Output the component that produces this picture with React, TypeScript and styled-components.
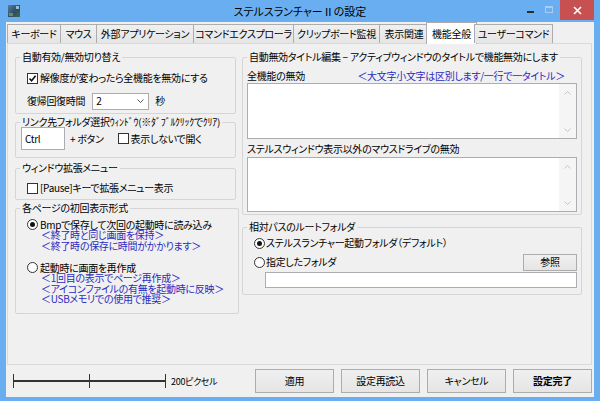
import React from "react";
import styled, { createGlobalStyle } from "styled-components";

/**
 * colours
 */
const FRAME = "#6aaef2";
const FACE = "#f0f0f0";
const LINK = "#2b2bc0";
const EDGE = "#abadb3";

const GlobalStyle = createGlobalStyle`
  html, body { margin: 0; padding: 0; background: ${FRAME}; }
  body {
    font-family: "Noto Sans CJK JP", "Noto Sans", sans-serif;
    font-size: 10px;
    letter-spacing: -0.3px;
    font-feature-settings: "palt" 1;
    color: #000;
  }
  * { box-sizing: border-box; }
`;

/**
 * window frame + title bar
 */
const Window = styled.div`
  width: 600px;
  height: 401px;
  display: flex;
  flex-direction: column;
  background: ${FRAME};
  overflow: hidden;
`,
  TitleBar = styled.div`
  flex: none;
  height: 22px;
  display: grid;
  grid-template-columns: 1fr auto 1fr;
  align-items: center;
`,
  IconSlot = styled.div`
  display: flex;
  padding-left: 8px;
`,
  Title = styled.div`
  font-size: 11px;
  letter-spacing: 0;
  line-height: 1;
  padding-top: 1px;
`,
  Controls = styled.div`
  justify-self: end;
  align-self: start;
  height: 20px;
  display: flex;
  align-items: center;
  padding-right: 6px;
`,
  MinGlyph = styled.span`
  width: 7px;
  height: 2px;
  margin: 4px 11px 0 0;
  background: #2b2b2b;
`,
  MaxGlyph = styled.span`
  width: 8px;
  height: 7px;
  margin: 0 7px 2px 0;
  border: 1px solid #a9cdf2;
  border-top-width: 2px;
`,
  CloseButton = styled.div`
  width: 34px;
  height: 20px;
  background: #c75050;
  display: flex;
  align-items: center;
  justify-content: center;
`;

/**
 * client area, tabs
 */
const Client = styled.div`
  flex: 1;
  margin: 0 6px 4px 6px;
  padding: 0 2px 0 1px;
  background: ${FACE};
  display: flex;
  flex-direction: column;
`,
  TabStrip = styled.div`
  flex: none;
  height: 21px;
  display: flex;
  align-items: flex-end;
`,
  Tab = styled.div<{ $w: number; $active?: boolean }>`
  flex: none;
  width: ${(p) => p.$w}px;
  height: ${(p) => (p.$active ? 22 : 19)}px;
  margin: ${(p) => (p.$active ? "0 -3px -1px -2px" : "0 -1px 0 0")};
  border: 1px solid #acacac;
  border-bottom: none;
  background: ${(p) => (p.$active ? "#fff" : "linear-gradient(#f0f0f0, #e5e5e5)")};
  position: ${(p) => (p.$active ? "relative" : "static")};
  z-index: 2;
  display: flex;
  align-items: center;
  justify-content: center;
  white-space: nowrap;
  line-height: 1;
`,
  Panel = styled.div`
  flex: none;
  height: 322px;
  border: 1px solid #d9d9d9;
  background: ${FACE};
  padding: 6px 9px 0 7px;
  display: flex;
  gap: 3px;
`,
  Column = styled.div<{ $w: number }>`
  width: ${(p) => p.$w}px;
  flex: none;
  display: flex;
  flex-direction: column;
`;

/**
 * group boxes and their rows
 */
const Group = styled.fieldset<{ $h: number; $w?: number; $top?: number }>`
  margin: ${(p) => p.$top ?? 0}px 0 0 0;
  padding: 0;
  min-width: 0;
  width: ${(p) => (p.$w ? `${p.$w}px` : "100%")};
  height: ${(p) => p.$h}px;
  flex: none;
  border: 1px solid #d5d5d5;
  border-radius: 2px;
  display: flex;
  flex-direction: column;
`,
  Legend = styled.legend`
  padding: 0 2px;
  margin-left: 4px;
  height: 14px;
  line-height: 14px;
  white-space: nowrap;
`,
  Row = styled.div<{ $top?: number; $indent?: number; $h?: number; $right?: number }>`
  flex: none;
  display: flex;
  align-items: center;
  height: ${(p) => p.$h ?? 14}px;
  margin: ${(p) => p.$top ?? 0}px ${(p) => p.$right ?? 0}px 0 ${(p) => p.$indent ?? 0}px;
  white-space: nowrap;
  line-height: 1;
`,
  Text = styled.span<{ $gap?: number; $blue?: boolean }>`
  margin-left: ${(p) => p.$gap ?? 0}px;
  color: ${(p) => (p.$blue ? LINK : "inherit")};
`,
  Hint = styled.div<{ $indent: number }>`
  flex: none;
  height: 10.5px;
  line-height: 10.5px;
  margin-left: ${(p) => p.$indent}px;
  color: ${LINK};
  white-space: nowrap;
`;

/**
 * controls
 */
const CheckBox = styled.span<{ $gap?: number }>`
  flex: none;
  width: 11px;
  height: 11px;
  margin-left: ${(p) => p.$gap ?? 0}px;
  border: 1px solid #333;
  background: #fff;
  display: inline-flex;
  align-items: center;
  justify-content: center;
`,
  Radio = styled.span<{ $on?: boolean }>`
  flex: none;
  width: 11px;
  height: 11px;
  border: 1px solid #333;
  border-radius: 50%;
  background: #fff;
  display: inline-flex;
  align-items: center;
  justify-content: center;
  &::after {
    content: "";
    width: 5px;
    height: 5px;
    border-radius: 50%;
    background: ${(p) => (p.$on ? "#111" : "transparent")};
  }
`,
  Combo = styled.div`
  flex: none;
  width: 57px;
  height: 17px;
  margin-left: 7px;
  border: 1px solid #acacac;
  background: #fff;
  display: flex;
  align-items: center;
  justify-content: space-between;
  padding: 0 4px 0 3px;
`,
  Field = styled.div<{ $w?: number; $h: number; $top?: number; $left?: number; $right?: number }>`
  flex: none;
  width: ${(p) => (p.$w ? `${p.$w}px` : "auto")};
  height: ${(p) => p.$h}px;
  margin: ${(p) => p.$top ?? 0}px ${(p) => p.$right ?? 0}px 0 ${(p) => p.$left ?? 0}px;
  border: 1px solid ${EDGE};
  background: #fff;
  display: flex;
  align-items: center;
  padding-left: 3px;
`,
  EditBox = styled.div<{ $h: number; $top: number }>`
  flex: none;
  height: ${(p) => p.$h}px;
  margin: ${(p) => p.$top}px 4px 0 4px;
  border: 1px solid ${EDGE};
  background: #fff;
  display: flex;
  justify-content: flex-end;
`,
  ScrollTrack = styled.div`
  width: 17px;
  background: #f5f5f5;
  display: flex;
  flex-direction: column;
  justify-content: space-between;
`,
  ScrollArrow = styled.div`
  height: 17px;
  display: flex;
  align-items: center;
  justify-content: center;
`,
  Button = styled.div<{ $w: number; $h: number; $bold?: boolean }>`
  flex: none;
  width: ${(p) => p.$w}px;
  height: ${(p) => p.$h}px;
  border: 1px solid #acacac;
  background: linear-gradient(#f0f0f0, #e5e5e5);
  display: flex;
  align-items: center;
  justify-content: center;
  font-weight: ${(p) => (p.$bold ? 700 : 400)};
  line-height: 1;
`;

/**
 * footer
 */
const Footer = styled.div`
  flex: 1;
  display: flex;
  align-items: flex-start;
  padding: 4px 0 0 6px;
`,
  Scale = styled.div`
  height: 24px;
  display: flex;
  align-items: center;
`,
  ScaleLabel = styled.span`
  font-size: 9px;
  margin-left: 4px;
  line-height: 1;
`,
  Buttons = styled.div`
  margin-left: auto;
  display: flex;
  gap: 7px;
`;

const AppIcon = () => (
  <svg width="12" height="12" viewBox="0 0 12 12">
    <defs>
      <linearGradient id="ic" x1="0" y1="0" x2="1" y2="1">
        <stop offset="0" stopColor="#5a7f9c" />
        <stop offset="0.55" stopColor="#2e4d66" />
        <stop offset="1" stopColor="#3d6a4a" />
      </linearGradient>
    </defs>
    <rect width="12" height="12" fill="url(#ic)" />
    <rect x="8" y="1" width="3" height="3" fill="#b8d8e8" opacity="0.8" />
    <rect x="1" y="8" width="4" height="3" fill="#8fb060" opacity="0.6" />
  </svg>
);

const CloseIcon = () => (
  <svg width="9" height="9" viewBox="0 0 9 9">
    <path d="M1 1 L8 8 M8 1 L1 8" stroke="#fff" strokeWidth="1.6" />
  </svg>
);

const Check = () => (
  <svg width="9" height="9" viewBox="0 0 9 9">
    <path d="M1.5 4.5 L3.6 6.8 L7.6 1.8" stroke="#111" strokeWidth="1.6" fill="none" />
  </svg>
);

const Chevron = ({ up, color = "#c4c4c4" }: { up?: boolean; color?: string }) => (
  <svg width="7" height="4" viewBox="0 0 7 4">
    <path d={up ? "M0.5 3.5 L3.5 0.5 L6.5 3.5" : "M0.5 0.5 L3.5 3.5 L6.5 0.5"} stroke={color} fill="none" />
  </svg>
);

const ScaleBar = () => (
  <svg width="154" height="16" viewBox="0 0 154 16">
    <rect x="0" y="7" width="153" height="2" fill="#333" />
    <rect x="0" y="1" width="1" height="14" fill="#333" />
    <rect x="76" y="1" width="1" height="14" fill="#333" />
    <rect x="152" y="1" width="1" height="14" fill="#333" />
  </svg>
);

const TABS = [
  { label: "キーボード", w: 54 },
  { label: "マウス", w: 37 },
  { label: "外部アプリケーション", w: 98 },
  { label: "コマンドエクスプローラ", w: 101 },
  { label: "クリップボード監視", w: 87 },
  { label: "表示関連", w: 50 },
  { label: "機能全般", w: 51, active: true },
  { label: "ユーザーコマンド", w: 79 },
];

const Edit = ({ h, top }: { h: number; top: number }) => (
  <EditBox $h={h} $top={top}>
    <ScrollTrack>
      <ScrollArrow>
        <Chevron up />
      </ScrollArrow>
      <ScrollArrow>
        <Chevron />
      </ScrollArrow>
    </ScrollTrack>
  </EditBox>
);

export default function App() {
  return (
    <>
      <GlobalStyle />
      <Window>
        <TitleBar>
          <IconSlot>
            <AppIcon />
          </IconSlot>
          <Title>ステルスランチャーⅡの設定</Title>
          <Controls>
            <MinGlyph />
            <MaxGlyph />
            <CloseButton>
              <CloseIcon />
            </CloseButton>
          </Controls>
        </TitleBar>

        <Client>
          <TabStrip>
            {TABS.map((t) => (
              <Tab key={t.label} $w={t.w} $active={t.active}>
                {t.label}
              </Tab>
            ))}
          </TabStrip>

          <Panel>
            <Column $w={224}>
              <Group $h={64} $w={221}>
                <Legend>自動有効/無効切り替え</Legend>
                <Row $top={6} $indent={11} $h={16}>
                  <CheckBox>
                    <Check />
                  </CheckBox>
                  <Text $gap={2}>解像度が変わったら全機能を無効にする</Text>
                </Row>
                <Row $top={6} $indent={11} $h={18}>
                  <Text>復帰回復時間</Text>
                  <Combo>
                    <span>2</span>
                    <Chevron color="#555" />
                  </Combo>
                  <Text $gap={6}>秒</Text>
                </Row>
              </Group>

              <Group $h={43} $w={221} $top={1}>
                <Legend>リンク先フォルダ選択ｳｨﾝﾄﾞｳ(※ﾀﾞﾌﾞﾙｸﾘｯｸでｸﾘｱ)</Legend>
                <Row $top={-2} $indent={5} $h={23}>
                  <Field $w={44} $h={23}>Ctrl</Field>
                  <Text $gap={5}>+ ボタン</Text>
                  <CheckBox $gap={14} />
                  <Text $gap={2}>表示しないで開く</Text>
                </Row>
              </Group>

              <Group $h={39} $w={221} $top={3}>
                <Legend>ウィンドウ拡張メニュー</Legend>
                <Row $top={5} $indent={11} $h={16}>
                  <CheckBox />
                  <Text $gap={2}>[Pause]キーで拡張メニュー表示</Text>
                </Row>
              </Group>

              <Group $h={113} $top={1}>
                <Legend>各ページの初回表示形式</Legend>
                <Row $top={4} $indent={11} $h={11}>
                  <Radio $on />
                  <Text $gap={2}>Bmpで保存して次回の起動時に読み込み</Text>
                </Row>
                <Hint $indent={25}>＜終了時と同じ画面を保持＞</Hint>
                <Hint $indent={25}>＜終了時の保存に時間がかかります＞</Hint>
                <Row $top={11} $indent={11} $h={11}>
                  <Radio />
                  <Text $gap={2}>起動時に画面を再作成</Text>
                </Row>
                <Hint $indent={25}>＜1回目の表示でページ再作成＞</Hint>
                <Hint $indent={25}>＜アイコンファイルの有無を起動時に反映＞</Hint>
                <Hint $indent={25}>＜USBメモリでの使用で推奨＞</Hint>
              </Group>
            </Column>

            <Column $w={340}>
              <Group $h={165}>
                <Legend>自動無効タイトル編集 − アクティブウィンドウのタイトルで機能無効にします</Legend>
                <Row $top={5} $indent={4} $right={16} $h={14} style={{ justifyContent: "space-between" }}>
                  <Text>全機能の無効</Text>
                  <Text $blue>＜大文字小文字は区別します/一行で一タイトル＞</Text>
                </Row>
                <Edit h={56} top={0} />
                <Row $top={3} $indent={4} $h={14}>
                  <Text>ステルスウィンドウ表示以外のマウスドライブの無効</Text>
                </Row>
                <Edit h={55} top={1} />
              </Group>

              <Group $h={75} $top={5}>
                <Legend>相対パスのルートフォルダ</Legend>
                <Row $top={2} $indent={11} $h={14}>
                  <Radio $on />
                  <Text $gap={1}>ステルスランチャー起動フォルダ（デフォルト）</Text>
                </Row>
                <Row $top={3} $indent={11} $right={4} $h={18}>
                  <Radio />
                  <Text $gap={1}>指定したフォルダ</Text>
                  <Button $w={54} $h={17} style={{ marginLeft: "auto" }}>
                    参照
                  </Button>
                </Row>
                <Field $h={16} $top={1} $left={22} $right={4} />
              </Group>
            </Column>
          </Panel>

          <Footer>
            <Scale>
              <ScaleBar />
              <ScaleLabel>200ピクセル</ScaleLabel>
            </Scale>
            <Buttons>
              <Button $w={79} $h={24}>適用</Button>
              <Button $w={79} $h={24}>設定再読込</Button>
              <Button $w={79} $h={24}>キャンセル</Button>
              <Button $w={79} $h={24} $bold>設定完了</Button>
            </Buttons>
          </Footer>
        </Client>
      </Window>
    </>
  );
}
